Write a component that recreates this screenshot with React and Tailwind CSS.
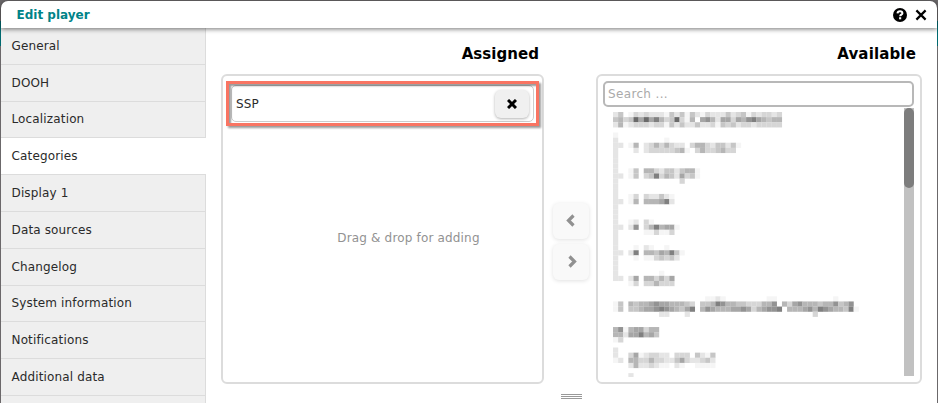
import React from "react";

const tabs = [
  "General",
  "DOOH",
  "Localization",
  "Categories",
  "Display 1",
  "Data sources",
  "Changelog",
  "System information",
  "Notifications",
  "Additional data",
];

// Censored category tree: row index -> darkness (0-9) for every mosaic block.
const mosaic = {
  0: "240132322214241421322242341323323",
  1: "453496968534931506752663657865455",
  2: "251233323314242242231434233233333",
  4: "1",
  5: "20000000001",
  6: "2201502353532203553244241",
  7: "200020233333451035334533",
  8: "2",
  9: "2",
  10: "2",
  11: "20014055324424551",
  12: "22014034835426341",
  13: "20000000000003",
  14: "2",
  15: "2",
  16: "200130322421",
  17: "220150555682",
  18: "2",
  19: "2",
  20: "2",
  21: "20012031",
  22: "2202703585661",
  23: "200000113113",
  24: "2",
  25: "2",
  26: "20001021001",
  27: "22028055465841",
  28: "20001011343420",
  29: "2",
  30: "2",
  31: "2000000001",
  32: "220260553536",
  33: "000130335333",
  36: "000000000000000000112100000000110000000000010",
  37: "14054556766555430445875544333557053675554557457",
  38: "140445667876546805765556676356778055567587655481",
  39: "000000000220002000000000000000000000000300",
  42: "571566355",
  43: "552668564",
  44: "13",
  45: "0",
  46: "2",
  47: "20036123322033304214",
  48: "12055335332246322342",
  49: "00025223211021001111",
  51: "0002",
};

const shades = ["#ffffff", "#f5f5f5", "#e5e5e5", "#d6d6d6", "#c6c6c6", "#b6b6b6", "#a6a6a6", "#939393", "#808080", "#6a6a6a"];

function CategoryTree() {
  const s = 5.12;
  const blocks = [];
  Object.entries(mosaic).forEach(([row, line]) => {
    [...line].forEach((d, col) => {
      if (d !== "0")
        blocks.push(
          <rect key={row + "-" + col} x={col * s} y={row * s} width={s + 0.1} height={s + 0.1} fill={shades[+d]} />
        );
    });
  });
  return (
    <svg width="250" height="267" viewBox="0 0 250 267" className="mt-[5.3px] ml-[9.7px] shrink-0">
      {blocks}
    </svg>
  );
}

function Chevron({ d, className }) {
  return (
    <svg width="12" height="14" viewBox="0 0 12 14" className={className} fill="none" stroke="#919191" strokeWidth="3.2">
      <path d={d} />
    </svg>
  );
}

export default function App() {
  return (
    <div className="flex h-[403px] w-[938px] flex-col overflow-hidden bg-[#6b686a] bg-[linear-gradient(#006a70,#006a70)] bg-[length:938px_25px] bg-[position:0_21px] bg-no-repeat px-px pt-px font-['DejaVu_Sans',Verdana,sans-serif] text-[12px] tracking-[0.15px] text-[#2a2a2a]">
      <header className="relative z-10 flex h-[27px] shrink-0 items-center rounded-t-[7px] bg-white pl-[15.5px] pr-[10px] shadow-[0_1px_5px_rgba(0,0,0,0.55)]">
        <h1 className="text-[12px] font-bold leading-none tracking-[0px] text-[#008388]">Edit player</h1>
        <div className="ml-auto flex items-center gap-[8px]">
          <svg width="14" height="14" viewBox="0 0 14 14">
            <circle cx="7" cy="7" r="7" fill="#000" />
            <path d="M4.5 5.4C4.6 3.8 5.7 3.3 7 3.3c1.4 0 2.4.7 2.4 1.9 0 1.5-2.2 1.5-2.2 3" fill="none" stroke="#fff" strokeWidth="2" />
            <rect x="6.1" y="9.2" width="2.1" height="2.1" fill="#fff" />
          </svg>
          <svg width="12" height="12" viewBox="0 0 12 12" stroke="#000" strokeWidth="2.2">
            <path d="M1.4 1.4 10.6 10.6M10.6 1.4 1.4 10.6" />
          </svg>
        </div>
      </header>

      <div className="flex min-h-0 flex-1 bg-white">
        <nav className="flex w-[205px] shrink-0 flex-col bg-[#efefef]">
          {tabs.map((t) => (
            <div
              key={t}
              className={
                "flex h-[36.8px] shrink-0 items-center border-b border-[#dcdcdc] pl-[10.5px] leading-none " +
                (t === "Categories" ? "bg-white" : "border-r")
              }
            >
              {t}
            </div>
          ))}
          <div className="flex-1 border-r border-[#dcdcdc]" />
        </nav>

        <main className="flex min-w-0 flex-1 flex-col pl-[15px] pr-[15px] pt-[14px]">
          <div className="flex">
            <section className="flex w-[323px] flex-col">
              <h2 className="flex h-[32px] items-start justify-end pr-[5px] text-[15px] font-bold leading-[25px] tracking-[0.05px] text-black">Assigned</h2>
              <div className="flex h-[310px] flex-col rounded-[6px] border-2 border-[#dcdcdc] px-[8px] pt-[9px]">
                <div className="relative flex h-[37px] items-center rounded-[5px] border border-[#ccc] pl-[4px] pr-[4px]">
                  <span className="leading-none">SSP</span>
                  <button className="ml-auto flex h-[28px] w-[34px] items-center justify-center rounded-[6px] bg-[#f0f0f0] shadow-[0_1px_3px_rgba(0,0,0,0.3)]">
                    <svg width="10" height="10" viewBox="0 0 10 10" stroke="#000" strokeWidth="3">
                      <path d="M1 1 9 9M9 1 1 9" />
                    </svg>
                  </button>
                  <div className="pointer-events-none absolute -left-[6px] -right-[6px] -top-[5px] -bottom-[5px] border-[3px] border-[#f97563] shadow-[2px_2px_2px_rgba(0,0,0,0.4),inset_2px_2px_2px_rgba(0,0,0,0.4)]" />
                </div>
                <p className="mt-[110px] pl-[52px] text-center leading-none tracking-[0.17px] text-[#929292]">Drag &amp; drop for adding</p>
              </div>
            </section>

            <div className="flex w-[52px] flex-col items-center gap-[5px] pl-[1px] pt-[161px]">
              <button className="flex h-[36px] w-[36px] items-center justify-center rounded-[6px] bg-[#f9f9f9] shadow-[0_1px_4px_rgba(0,0,0,0.12)]">
                <Chevron d="M8.5 1.5 3.5 6.5 8.5 11.5" />
              </button>
              <button className="flex h-[36px] w-[36px] items-center justify-center rounded-[6px] bg-[#f9f9f9] shadow-[0_1px_4px_rgba(0,0,0,0.12)]">
                <Chevron d="M4.5 1.5 9.5 6.5 4.5 11.5" />
              </button>
            </div>

            <section className="flex w-[326px] flex-col">
              <h2 className="flex h-[32px] items-start justify-end pr-[6px] text-[15px] font-bold leading-[25px] tracking-[0.15px] text-black">Available</h2>
              <div className="flex h-[310px] flex-col rounded-[6px] border-2 border-[#dcdcdc] pl-[5px] pr-[6px] pt-[5px]">
                <div className="flex h-[26px] shrink-0 items-center rounded-[5px] border-2 border-[#b8b8b8] pl-[3px] leading-none tracking-[0.35px] text-[#aaa]">Search ...</div>
                <div className="flex h-[270px] justify-between overflow-hidden">
                  <CategoryTree />
                  <div className="mt-[1px] h-[268px] w-[10px] bg-[#c1c1c1]">
                    <div className="h-[80px] rounded-[5px] bg-[#7d7d7d]" />
                  </div>
                </div>
              </div>
            </section>
          </div>
          <div className="ml-[340px] mt-[10px] flex w-[21px] flex-col gap-px">
            <div className="h-px bg-[#999]" />
            <div className="h-px bg-[#999]" />
            <div className="h-px bg-[#999]" />
          </div>
        </main>
      </div>
    </div>
  );
}
